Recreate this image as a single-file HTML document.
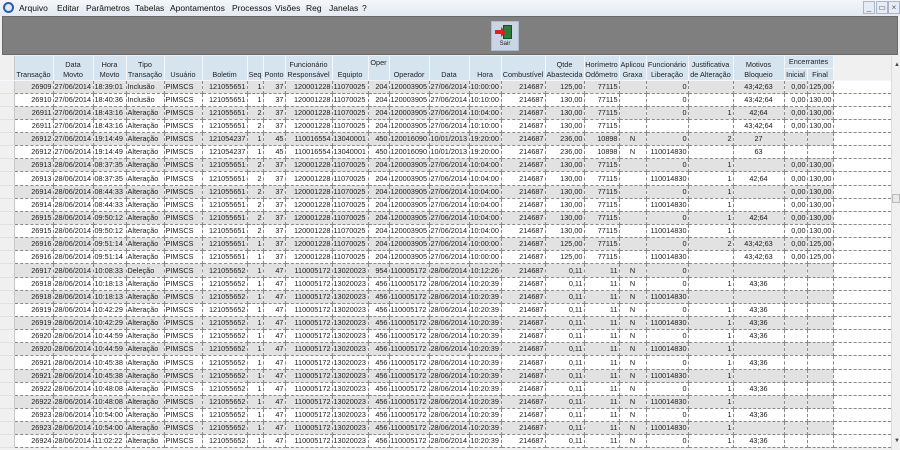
<!DOCTYPE html>
<html><head><meta charset="utf-8">
<style>
*{margin:0;padding:0;box-sizing:border-box}
html{width:900px;height:450px;overflow:hidden}
body{width:900px;height:450px;overflow:hidden;background:#f0f0f0;font-family:"Liberation Sans",Arial,sans-serif;font-size:7.3px;color:#1a1a1a;position:relative}
#menu{position:absolute;left:0;top:0;width:900px;height:16px;background:linear-gradient(#f4f6fa,#e4e9f2);}
#menu span{position:absolute;top:3px;font-size:8.5px;color:#111}
#logo{position:absolute;left:3px;top:2px;width:11px;height:11px;border-radius:50%;border:2.5px solid #2f5e9c;background:#dfe8f4}
.wb{position:absolute;top:1px;width:12px;height:13px;border:1px solid #aab6c8;background:#e6ecf5;font-size:8px;text-align:center;color:#555;line-height:11px}
#tool{position:absolute;left:2px;top:16px;width:896px;height:39px;background:#7f7f7f;border:1px solid #6a6a6a}
#sair{position:absolute;left:491px;top:21px;width:28px;height:30px;background:#c9d5e5;border:1px solid #b0bccc}
#sair .door{position:absolute;left:11px;top:3px;width:9px;height:14px;background:#2f7d3a;border:1px solid #1d4d24}
#sair .t{position:absolute;left:0;top:19px;width:26px;text-align:center;font-size:6px;color:#222}
table{position:absolute;left:0;top:56px;width:891px;border-collapse:collapse;table-layout:fixed}
td,th{white-space:nowrap;overflow:hidden;padding:0 1px;line-height:12px}
th{background:#d6e4f0;font-weight:normal;border-right:1px solid #f4f7fb;border-bottom:1px solid #f4f7fb;vertical-align:bottom;text-align:center;line-height:10px;color:#222;padding:0}
th.g0{background:#f0f0f0;border-right:1px solid #c8c8c8}
th.e{background:#f0f0f0}
tbody tr{height:13.15px}
td{border-right:1px dashed #8a8a8a;border-bottom:1px dashed #8a8a8a;background:#fff}
tr.g td{background:#e2e2e2}
td:first-child,tr.g td:first-child{background:#f0f0f0;border-right:1px solid #c8c8c8;border-bottom:1px solid #e0e0e0}
td:last-child,tr.g td:last-child{background:#fff;border-right:none}
td{text-align:left}
td:nth-child(2),td:nth-child(7),td:nth-child(8),td:nth-child(9),td:nth-child(10),td:nth-child(12),td:nth-child(16),td:nth-child(17),td:nth-child(18),td:nth-child(20),td:nth-child(21),td:nth-child(23),td:nth-child(24){text-align:right}
td:nth-child(19),td:nth-child(22){text-align:center}
#sb{position:absolute;left:891px;top:56px;width:9px;height:394px;background:#f0f0f0;border-left:1px solid #ddd}
#sb .u{position:absolute;left:2px;top:6px;font-size:6px;color:#444}
#sb .d{position:absolute;left:2px;top:382px;font-size:6px;color:#444}
#sb .th{position:absolute;left:0;top:138px;width:8px;height:9px;border:1px solid #bbb;background:#e8e8e8}
</style></head><body>
<div id="menu">
<div id="logo"></div>
<span style="left:19px">Arquivo</span>
<span style="left:57px">Editar</span>
<span style="left:86px">Parâmetros</span>
<span style="left:135px">Tabelas</span>
<span style="left:170px">Apontamentos</span>
<span style="left:232px">Processos</span>
<span style="left:275px">Visões</span>
<span style="left:306px">Reg</span>
<span style="left:329px">Janelas</span>
<span style="left:362px">?</span>
<div class="wb" style="left:863px">_</div>
<div class="wb" style="left:876px">&#9645;</div>
<div class="wb" style="left:888px">×</div>
</div>
<div id="tool"></div>
<div id="sair"><div class="door"></div>
<svg style="position:absolute;left:3px;top:5px" width="12" height="10"><path d="M0 3H6V0L11 5L6 10V7H0Z" fill="#e02020"/></svg>
<div class="t">Sair</div></div>
<table>
<colgroup><col style="width:14px"><col style="width:39px"><col style="width:40px"><col style="width:33px"><col style="width:38px"><col style="width:38px"><col style="width:45px"><col style="width:16px"><col style="width:22px"><col style="width:47px"><col style="width:36px"><col style="width:21px"><col style="width:40px"><col style="width:40px"><col style="width:32px"><col style="width:44px"><col style="width:39px"><col style="width:35px"><col style="width:27px"><col style="width:42px"><col style="width:45px"><col style="width:51px"><col style="width:23px"><col style="width:26px"><col style="width:58px"></colgroup>
<thead>
<tr style="height:12px"><th class="g0" rowspan="2"></th><th rowspan="2">Transação</th><th rowspan="2">Data<br>Movto</th><th rowspan="2">Hora<br>Movto</th><th rowspan="2">Tipo<br>Transação</th><th rowspan="2">Usuário</th><th rowspan="2">Boletim</th><th rowspan="2">Seq</th><th rowspan="2">Ponto</th><th rowspan="2">Funcionário<br>Responsável</th><th rowspan="2">Equipto</th><th rowspan="2" style="vertical-align:top;padding-top:2px">Oper</th><th rowspan="2">Operador</th><th rowspan="2">Data</th><th rowspan="2">Hora</th><th rowspan="2">Combustível</th><th rowspan="2">Qtde<br>Abastecida</th><th rowspan="2">Horímetro<br>Odômetro</th><th rowspan="2">Aplicou<br>Graxa</th><th rowspan="2">Funcionário<br>Liberação</th><th rowspan="2">Justificativa<br>de Alteração</th><th rowspan="2">Motivos<br>Bloqueio</th><th colspan="2" style="vertical-align:middle">Encerrantes</th><th class="e" rowspan="2"></th></tr>
<tr style="height:12px"><th>Inicial</th><th>Final</th></tr>
</thead>
<tbody>
<tr class="g"><td></td><td>26909</td><td>27/06/2014</td><td>18:39:01</td><td>Inclusão</td><td>PIMSCS</td><td>121055651</td><td>1</td><td>37</td><td>120001228</td><td>11070025</td><td>204</td><td>120003905</td><td>27/06/2014</td><td>10:00:00</td><td>214687</td><td>125,00</td><td>77115</td><td></td><td>0</td><td></td><td>43;42;63</td><td>0,00</td><td>125,00</td><td></td></tr>
<tr><td></td><td>26910</td><td>27/06/2014</td><td>18:40:36</td><td>Inclusão</td><td>PIMSCS</td><td>121055651</td><td>1</td><td>37</td><td>120001228</td><td>11070025</td><td>204</td><td>120003905</td><td>27/06/2014</td><td>10:10:00</td><td>214687</td><td>130,00</td><td>77115</td><td></td><td>0</td><td></td><td>43;42;64</td><td>0,00</td><td>130,00</td><td></td></tr>
<tr class="g"><td></td><td>26911</td><td>27/06/2014</td><td>18:43:16</td><td>Alteração</td><td>PIMSCS</td><td>121055651</td><td>2</td><td>37</td><td>120001228</td><td>11070025</td><td>204</td><td>120003905</td><td>27/06/2014</td><td>10:04:00</td><td>214687</td><td>130,00</td><td>77115</td><td></td><td>0</td><td>1</td><td>42;64</td><td>0,00</td><td>130,00</td><td></td></tr>
<tr><td></td><td>26911</td><td>27/06/2014</td><td>18:43:16</td><td>Alteração</td><td>PIMSCS</td><td>121055651</td><td>2</td><td>37</td><td>120001228</td><td>11070025</td><td>204</td><td>120003905</td><td>27/06/2014</td><td>10:10:00</td><td>214687</td><td>130,00</td><td>77115</td><td></td><td></td><td></td><td>43;42;64</td><td>0,00</td><td>130,00</td><td></td></tr>
<tr class="g"><td></td><td>26912</td><td>27/06/2014</td><td>19:14:49</td><td>Alteração</td><td>PIMSCS</td><td>121054237</td><td>1</td><td>45</td><td>110016554</td><td>13040001</td><td>450</td><td>120016090</td><td>10/01/2013</td><td>19:20:00</td><td>214687</td><td>236,00</td><td>10898</td><td>N</td><td>0</td><td>2</td><td>27</td><td></td><td></td><td></td></tr>
<tr><td></td><td>26912</td><td>27/06/2014</td><td>19:14:49</td><td>Alteração</td><td>PIMSCS</td><td>121054237</td><td>1</td><td>45</td><td>110016554</td><td>13040001</td><td>450</td><td>120016090</td><td>10/01/2013</td><td>19:20:00</td><td>214687</td><td>236,00</td><td>10898</td><td>N</td><td>110014830</td><td></td><td>63</td><td></td><td></td><td></td></tr>
<tr class="g"><td></td><td>26913</td><td>28/06/2014</td><td>08:37:35</td><td>Alteração</td><td>PIMSCS</td><td>121055651</td><td>2</td><td>37</td><td>120001228</td><td>11070025</td><td>204</td><td>120003905</td><td>27/06/2014</td><td>10:04:00</td><td>214687</td><td>130,00</td><td>77115</td><td></td><td>0</td><td>1</td><td></td><td>0,00</td><td>130,00</td><td></td></tr>
<tr><td></td><td>26913</td><td>28/06/2014</td><td>08:37:35</td><td>Alteração</td><td>PIMSCS</td><td>121055651</td><td>2</td><td>37</td><td>120001228</td><td>11070025</td><td>204</td><td>120003905</td><td>27/06/2014</td><td>10:04:00</td><td>214687</td><td>130,00</td><td>77115</td><td></td><td>110014830</td><td>1</td><td>42;64</td><td>0,00</td><td>130,00</td><td></td></tr>
<tr class="g"><td></td><td>26914</td><td>28/06/2014</td><td>08:44:33</td><td>Alteração</td><td>PIMSCS</td><td>121055651</td><td>2</td><td>37</td><td>120001228</td><td>11070025</td><td>204</td><td>120003905</td><td>27/06/2014</td><td>10:04:00</td><td>214687</td><td>130,00</td><td>77115</td><td></td><td>0</td><td>1</td><td></td><td>0,00</td><td>130,00</td><td></td></tr>
<tr><td></td><td>26914</td><td>28/06/2014</td><td>08:44:33</td><td>Alteração</td><td>PIMSCS</td><td>121055651</td><td>2</td><td>37</td><td>120001228</td><td>11070025</td><td>204</td><td>120003905</td><td>27/06/2014</td><td>10:04:00</td><td>214687</td><td>130,00</td><td>77115</td><td></td><td>110014830</td><td>1</td><td></td><td>0,00</td><td>130,00</td><td></td></tr>
<tr class="g"><td></td><td>26915</td><td>28/06/2014</td><td>09:50:12</td><td>Alteração</td><td>PIMSCS</td><td>121055651</td><td>2</td><td>37</td><td>120001228</td><td>11070025</td><td>204</td><td>120003905</td><td>27/06/2014</td><td>10:04:00</td><td>214687</td><td>130,00</td><td>77115</td><td></td><td>0</td><td>1</td><td>42;64</td><td>0,00</td><td>130,00</td><td></td></tr>
<tr><td></td><td>26915</td><td>28/06/2014</td><td>09:50:12</td><td>Alteração</td><td>PIMSCS</td><td>121055651</td><td>2</td><td>37</td><td>120001228</td><td>11070025</td><td>204</td><td>120003905</td><td>27/06/2014</td><td>10:04:00</td><td>214687</td><td>130,00</td><td>77115</td><td></td><td>110014830</td><td>1</td><td></td><td>0,00</td><td>130,00</td><td></td></tr>
<tr class="g"><td></td><td>26916</td><td>28/06/2014</td><td>09:51:14</td><td>Alteração</td><td>PIMSCS</td><td>121055651</td><td>1</td><td>37</td><td>120001228</td><td>11070025</td><td>204</td><td>120003905</td><td>27/06/2014</td><td>10:00:00</td><td>214687</td><td>125,00</td><td>77115</td><td></td><td>0</td><td>2</td><td>43;42;63</td><td>0,00</td><td>125,00</td><td></td></tr>
<tr><td></td><td>26916</td><td>28/06/2014</td><td>09:51:14</td><td>Alteração</td><td>PIMSCS</td><td>121055651</td><td>1</td><td>37</td><td>120001228</td><td>11070025</td><td>204</td><td>120003905</td><td>27/06/2014</td><td>10:00:00</td><td>214687</td><td>125,00</td><td>77115</td><td></td><td>110014830</td><td></td><td>43;42;63</td><td>0,00</td><td>125,00</td><td></td></tr>
<tr class="g"><td></td><td>26917</td><td>28/06/2014</td><td>10:08:33</td><td>Deleção</td><td>PIMSCS</td><td>121055652</td><td>1</td><td>47</td><td>110005172</td><td>13020023</td><td>954</td><td>110005172</td><td>28/06/2014</td><td>10:12:26</td><td>214687</td><td>0,11</td><td>11</td><td>N</td><td>0</td><td></td><td></td><td></td><td></td><td></td></tr>
<tr><td></td><td>26918</td><td>28/06/2014</td><td>10:18:13</td><td>Alteração</td><td>PIMSCS</td><td>121055652</td><td>1</td><td>47</td><td>110005172</td><td>13020023</td><td>456</td><td>110005172</td><td>28/06/2014</td><td>10:20:39</td><td>214687</td><td>0,11</td><td>11</td><td>N</td><td>0</td><td>1</td><td>43;36</td><td></td><td></td><td></td></tr>
<tr class="g"><td></td><td>26918</td><td>28/06/2014</td><td>10:18:13</td><td>Alteração</td><td>PIMSCS</td><td>121055652</td><td>1</td><td>47</td><td>110005172</td><td>13020023</td><td>456</td><td>110005172</td><td>28/06/2014</td><td>10:20:39</td><td>214687</td><td>0,11</td><td>11</td><td>N</td><td>110014830</td><td></td><td></td><td></td><td></td><td></td></tr>
<tr><td></td><td>26919</td><td>28/06/2014</td><td>10:42:29</td><td>Alteração</td><td>PIMSCS</td><td>121055652</td><td>1</td><td>47</td><td>110005172</td><td>13020023</td><td>456</td><td>110005172</td><td>28/06/2014</td><td>10:20:39</td><td>214687</td><td>0,11</td><td>11</td><td>N</td><td>0</td><td>1</td><td>43;36</td><td></td><td></td><td></td></tr>
<tr class="g"><td></td><td>26919</td><td>28/06/2014</td><td>10:42:29</td><td>Alteração</td><td>PIMSCS</td><td>121055652</td><td>1</td><td>47</td><td>110005172</td><td>13020023</td><td>456</td><td>110005172</td><td>28/06/2014</td><td>10:20:39</td><td>214687</td><td>0,11</td><td>11</td><td>N</td><td>110014830</td><td>1</td><td>43;36</td><td></td><td></td><td></td></tr>
<tr><td></td><td>26920</td><td>28/06/2014</td><td>10:44:59</td><td>Alteração</td><td>PIMSCS</td><td>121055652</td><td>1</td><td>47</td><td>110005172</td><td>13020023</td><td>456</td><td>110005172</td><td>28/06/2014</td><td>10:20:39</td><td>214687</td><td>0,11</td><td>11</td><td>N</td><td>0</td><td>1</td><td>43;36</td><td></td><td></td><td></td></tr>
<tr class="g"><td></td><td>26920</td><td>28/06/2014</td><td>10:44:59</td><td>Alteração</td><td>PIMSCS</td><td>121055652</td><td>1</td><td>47</td><td>110005172</td><td>13020023</td><td>456</td><td>110005172</td><td>28/06/2014</td><td>10:20:39</td><td>214687</td><td>0,11</td><td>11</td><td>N</td><td>110014830</td><td>1</td><td></td><td></td><td></td><td></td></tr>
<tr><td></td><td>26921</td><td>28/06/2014</td><td>10:45:38</td><td>Alteração</td><td>PIMSCS</td><td>121055652</td><td>1</td><td>47</td><td>110005172</td><td>13020023</td><td>456</td><td>110005172</td><td>28/06/2014</td><td>10:20:39</td><td>214687</td><td>0,11</td><td>11</td><td>N</td><td>0</td><td>1</td><td>43;36</td><td></td><td></td><td></td></tr>
<tr class="g"><td></td><td>26921</td><td>28/06/2014</td><td>10:45:38</td><td>Alteração</td><td>PIMSCS</td><td>121055652</td><td>1</td><td>47</td><td>110005172</td><td>13020023</td><td>456</td><td>110005172</td><td>28/06/2014</td><td>10:20:39</td><td>214687</td><td>0,11</td><td>11</td><td>N</td><td>110014830</td><td>1</td><td></td><td></td><td></td><td></td></tr>
<tr><td></td><td>26922</td><td>28/06/2014</td><td>10:48:08</td><td>Alteração</td><td>PIMSCS</td><td>121055652</td><td>1</td><td>47</td><td>110005172</td><td>13020023</td><td>456</td><td>110005172</td><td>28/06/2014</td><td>10:20:39</td><td>214687</td><td>0,11</td><td>11</td><td>N</td><td>0</td><td>1</td><td>43;36</td><td></td><td></td><td></td></tr>
<tr class="g"><td></td><td>26922</td><td>28/06/2014</td><td>10:48:08</td><td>Alteração</td><td>PIMSCS</td><td>121055652</td><td>1</td><td>47</td><td>110005172</td><td>13020023</td><td>456</td><td>110005172</td><td>28/06/2014</td><td>10:20:39</td><td>214687</td><td>0,11</td><td>11</td><td>N</td><td>110014830</td><td>1</td><td></td><td></td><td></td><td></td></tr>
<tr><td></td><td>26923</td><td>28/06/2014</td><td>10:54:00</td><td>Alteração</td><td>PIMSCS</td><td>121055652</td><td>1</td><td>47</td><td>110005172</td><td>13020023</td><td>456</td><td>110005172</td><td>28/06/2014</td><td>10:20:39</td><td>214687</td><td>0,11</td><td>11</td><td>N</td><td>0</td><td>1</td><td>43;36</td><td></td><td></td><td></td></tr>
<tr class="g"><td></td><td>26923</td><td>28/06/2014</td><td>10:54:00</td><td>Alteração</td><td>PIMSCS</td><td>121055652</td><td>1</td><td>47</td><td>110005172</td><td>13020023</td><td>456</td><td>110005172</td><td>28/06/2014</td><td>10:20:39</td><td>214687</td><td>0,11</td><td>11</td><td>N</td><td>110014830</td><td>1</td><td></td><td></td><td></td><td></td></tr>
<tr><td></td><td>26924</td><td>28/06/2014</td><td>11:02:22</td><td>Alteração</td><td>PIMSCS</td><td>121055652</td><td>1</td><td>47</td><td>110005172</td><td>13020023</td><td>456</td><td>110005172</td><td>28/06/2014</td><td>10:20:39</td><td>214687</td><td>0,11</td><td>11</td><td>N</td><td>0</td><td>1</td><td>43;36</td><td></td><td></td><td></td></tr>
</tbody>
</table>
<div id="sb"><div class="u">▲</div><div class="th"></div><div class="d">▼</div></div>
</body></html>
